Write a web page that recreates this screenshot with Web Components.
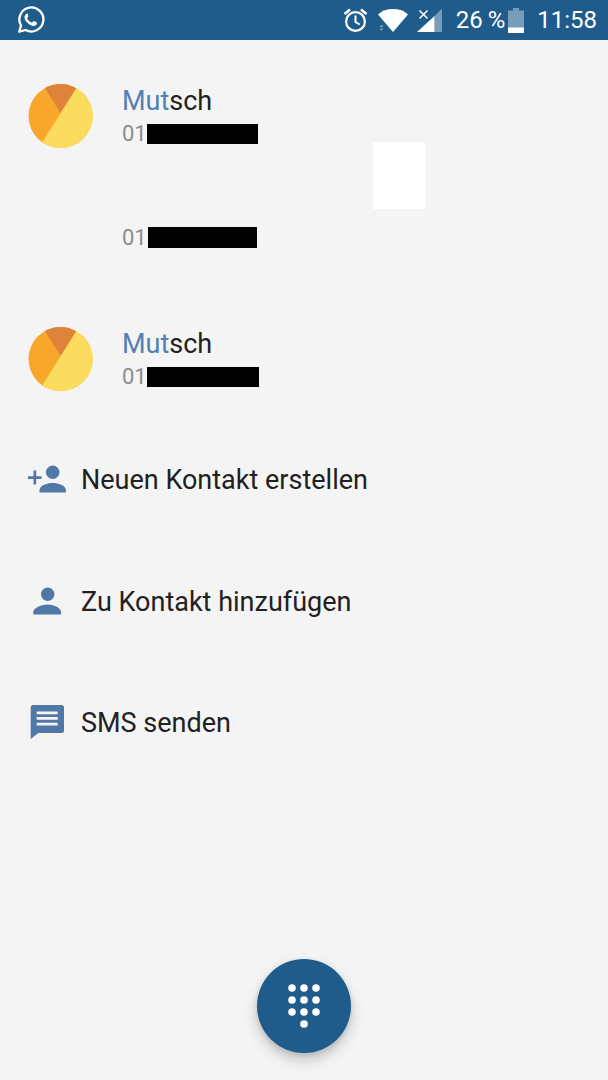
<!DOCTYPE html>
<html lang="de">
<head>
<meta charset="utf-8">
<title>Wählen</title>
<style>
    html, body { margin: 0; height: 100%; background: #f4f4f4; }
    body { font-family: Roboto, "Liberation Sans", sans-serif; }
</style>
</head>
<body>
<dialer-screen>
    <status-bar slot="status"></status-bar>
    <contact-row name="Mutsch" match="Mut" redact="111"></contact-row>
    <contact-row redact="109"></contact-row>
    <contact-row name="Mutsch" match="Mut" redact="112"></contact-row>
    <action-row icon="add">Neuen Kontakt erstellen</action-row>
    <action-row icon="person">Zu Kontakt hinzufügen</action-row>
    <action-row icon="sms">SMS senden</action-row>
    <dial-fab slot="fab"></dial-fab>
</dialer-screen>

<script>
class DialerScreen extends HTMLElement {
    constructor() {
        super();
        this.attachShadow({ mode: 'open' });
        this.shadowRoot.innerHTML = `
            <style>
                :host {
                    display: flex;
                    flex-direction: column;
                    position: relative;
                    height: 1080px;
                    overflow: hidden;
                    background: #f4f4f4;
                }
                .list {
                    flex: 1;
                    display: flex;
                    flex-direction: column;
                    padding-top: 15px;
                }
                .blank {
                    position: absolute;
                    left: 373px;
                    top: 142px;
                    width: 52px;
                    height: 67px;
                    background: #fff;
                }
                .fab {
                    display: flex;
                    justify-content: center;
                    padding-bottom: 27px;
                }
            </style>
            <slot name="status"></slot>
            <div class="list"><slot></slot></div>
            <div class="blank"></div>
            <div class="fab"><slot name="fab"></slot></div>
        `;
    }
}

class StatusBar extends HTMLElement {
    constructor() {
        super();
        this.attachShadow({ mode: 'open' });
        this.shadowRoot.innerHTML = `
            <style>
                :host {
                    display: flex;
                    align-items: center;
                    height: 40px;
                    background: #1f5c8b;
                    color: #fff;
                    font: 400 24px Roboto, sans-serif;
                    flex: none;
                }
                svg { display: block; flex: none; }
                .app { margin-left: 17px; margin-right: auto; }
                .alarm { margin-right: 10px; }
                .wifi { margin-right: 9px; }
                .signal { margin-right: 14px; }
                .pct { margin-right: 3px; white-space: nowrap; word-spacing: -1px; }
                .batt { margin-right: 13px; }
                .time { margin-right: 11px; }
            </style>
            <svg class="app" width="28" height="28" viewBox="0 0 28 28">
                <path d="M2.3 25.6l1.7-6.1A12 12 0 1 1 8.6 24z" fill="none" stroke="#fff" stroke-width="2.3" stroke-linejoin="round"/>
                <path d="M10.3 7.6c-.5 0-1.100.2-1.600.8-.6.7-1.200 1.700-1.200 3 0 1.800 1.300 3.700 2.700 5.200 1.600 1.700 3.700 3 5.800 3.300 1.500.2 3.100-.5 3.700-1.700.3-.6.400-1.300.3-1.700l-3-1.500c-.3-.1-.5 0-.7.200l-1.100 1.300c-.2.200-.4.300-.7.100-1.900-.8-3.300-2.100-4.400-4-.1-.3 0-.5.100-.6l.9-1.200c.2-.2.200-.4.100-.7L11 8c-.1-.3-.4-.4-.7-.4z" fill="#fff"/>
            </svg>
            <svg class="alarm" width="25" height="26" viewBox="0 0 25 26" fill="none" stroke="#fff">
                <circle cx="12.500" cy="14.500" r="9.400" stroke-width="2.200"/>
                <path d="M12.500 8.500v6.500l4.200 2.500" stroke-width="2"/>
                <path d="M1.500 7L7 2.500M23.500 7L18 2.500" stroke-width="2.600"/>
            </svg>
            <svg class="wifi" width="30" height="24" viewBox="0 0 30 24">
                <path d="M0 6.500C4 2.800 9.200 1 15 1s11 1.800 15 5.500L15 24z" fill="#fff"/>
                <path d="M1.500 19l2-2.500 2 2.500zM1.500 20.500l2 2.500 2-2.500z" fill="#fff" opacity=".4"/>
            </svg>
            <svg class="signal" width="25" height="24" viewBox="0 0 25 24">
                <path d="M25 0.500V24H17.500V8z" fill="#fff" opacity=".4"/>
                <path d="M17.500 8V24H0z" fill="#fff"/>
                <path d="M2.500 2.500l8 8M10.500 2.500l-8 8" stroke="#fff" stroke-width="1.500"/>
            </svg>
            <span class="pct">26 %</span>
            <svg class="batt" width="16" height="25" viewBox="0 0 16 25">
                <path d="M5 0h6v2.500h5V25H0V2.500h5z" fill="#fff" opacity=".4"/>
                <rect y="19.500" width="16" height="5.500" fill="#fff"/>
            </svg>
            <span class="time">11:58</span>
        `;
    }
}

class ContactRow extends HTMLElement {
    constructor() {
        super();
        this.attachShadow({ mode: 'open' });
    }

    connectedCallback() {
        const name = this.getAttribute('name');
        const match = this.getAttribute('match') || '';
        const redact = this.getAttribute('redact');
        this.shadowRoot.innerHTML = `
            <style>
                :host {
                    display: flex;
                    align-items: center;
                    height: 121.5px;
                }
                .avatar {
                    display: block;
                    flex: none;
                    margin-left: 28px;
                }
                .body {
                    display: flex;
                    flex-direction: column;
                    margin-left: 122px;
                }
                .avatar + .body { margin-left: 28px; padding-top: 5px; }
                .name {
                    font-size: 27px;
                    line-height: 31px;
                    color: #212121;
                }
                .name b { font-weight: 400; color: #5380b2; }
                .num {
                    display: flex;
                    align-items: center;
                    font-size: 22px;
                    line-height: 33px;
                    color: #8c8c8c;
                }
                .redact {
                    height: 21px;
                    background: #000;
                    margin-left: 1px;
                    margin-bottom: -1px;
                }
                .name + .num .redact {
                    height: 20px;
                    margin-left: 0;
                }
            </style>
            ${name ? `
            <svg class="avatar" width="66" height="66" viewBox="-32.500 -33 66 66">
                <circle r="32" fill="#f9a72b"/>
                <path d="M0 -3L-15.600 -28A32 32 0 0 1 15.800 -27.800Z" fill="#e0833a"/>
                <path d="M15.800 -27.800A32 32 0 1 1 -18.200 26.300Z" fill="#fbdc5e"/>
            </svg>` : ''}
            <div class="body">
                ${name ? `<div class="name"><b>${match}</b>${name.slice(match.length)}</div>` : ''}
                <div class="num">01<span class="redact" style="width:${redact}px"></span></div>
            </div>
        `;
    }
}

class ActionRow extends HTMLElement {
    constructor() {
        super();
        this.attachShadow({ mode: 'open' });
    }

    connectedCallback() {
        const icons = {
            add: `<svg width="40" height="30" viewBox="0 0 40 30" fill="#4f78a6">
                    <circle cx="24.700" cy="7.200" r="6.700"/>
                    <path d="M11.500 27.500v-2.500c0-4.500 8-7 13.200-7s13.200 2.500 13.200 7v2.500z"/>
                    <path d="M0 11.200h5.500V5.500h2.700v5.700h5.300v2.700H8.200V19.500H5.500v-5.600H0z"/>
                  </svg>`,
            person: `<svg width="40" height="30" viewBox="0 0 40 30" fill="#4f78a6">
                    <circle cx="19.700" cy="7.300" r="6.700"/>
                    <path d="M5.300 27.500v-2.500c0-4.500 9-7.500 14.400-7.500s13.300 3 13.300 7.500v2.500z"/>
                  </svg>`,
            sms: `<svg width="40" height="36" viewBox="0 0 40 36">
                    <path d="M4.500 0h29A2.500 2.500 0 0 1 36 2.500v23a2.500 2.500 0 0 1-2.500 2.500H10.300l-7.600 6V2.500A2.500 2.500 0 0 1 4.500 0z" fill="#4f78a6"/>
                    <path d="M8.700 6.500h21v2.700h-21zM8.700 12h21v2.800h-21zM8.700 17.700h21v2.800h-21z" fill="#f4f4f4"/>
                  </svg>`
        };
        this.shadowRoot.innerHTML = `
            <style>
                :host {
                    display: flex;
                    align-items: center;
                    height: 121.5px;
                    font-size: 27px;
                    color: #212121;
                }
                .icon {
                    flex: none;
                    display: flex;
                    justify-content: center;
                    width: 40px;
                    margin-left: 28px;
                    margin-right: 13px;
                }
                svg { display: block; }
            </style>
            <span class="icon">${icons[this.getAttribute('icon')]}</span>
            <span><slot></slot></span>
        `;
    }
}

class DialFab extends HTMLElement {
    constructor() {
        super();
        this.attachShadow({ mode: 'open' });
        const dots = [];
        for (let row = 0; row < 3; row++) {
            for (let col = 0; col < 3; col++) {
                dots.push(`<circle cx="${4 + col * 12}" cy="${4 + row * 12}" r="3.800"/>`);
            }
        }
        dots.push('<circle cx="16" cy="40" r="3.800"/>');
        this.shadowRoot.innerHTML = `
            <style>
                :host {
                    display: flex;
                    align-items: center;
                    justify-content: center;
                    width: 94px;
                    height: 94px;
                    border-radius: 50%;
                    background: #1f5c8b;
                    box-shadow: 0 7px 14px rgba(0, 0, 0, 0.2), 0 2px 5px rgba(0, 0, 0, 0.1);
                }
                svg { display: block; }
            </style>
            <svg width="32" height="44" viewBox="0 0 32 44" fill="#fff">${dots.join('')}</svg>
        `;
    }
}

customElements.define('dialer-screen', DialerScreen);
customElements.define('status-bar', StatusBar);
customElements.define('contact-row', ContactRow);
customElements.define('action-row', ActionRow);
customElements.define('dial-fab', DialFab);
</script>
</body>
</html>
